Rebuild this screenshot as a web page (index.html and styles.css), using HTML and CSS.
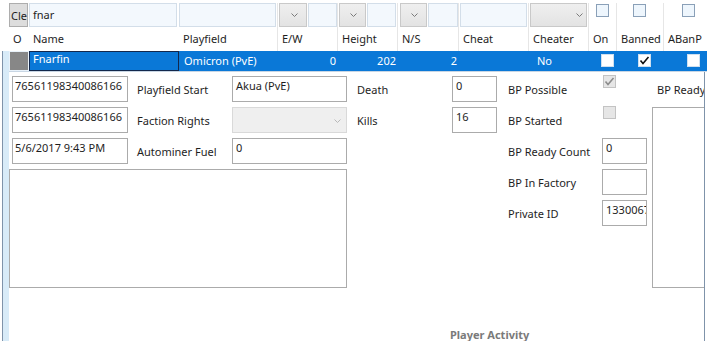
FILE: index.html
```html
<!DOCTYPE html>
<html>
<head>
  <meta charset="utf-8">
  <link rel="stylesheet" href="styles.css">
</head>
<body>
  <div class="heads">
    <div class="col c0">
      <div class="filter"><button class="clear">Cle</button></div>
      <div class="title">O</div>
    </div>
    <div class="col c1">
      <div class="filter"><div class="tb w148">fnar</div></div>
      <div class="title">Name</div>
    </div>
    <div class="col c2">
      <div class="filter"><div class="tb w97"></div></div>
      <div class="title">Playfield</div>
    </div>
    <div class="col c3">
      <div class="filter pad1">
        <div class="combo w28 mid"><svg class="chev" width="7" height="4"><polyline points="0.5,0.5 3.5,3.5 6.5,0.5" /></svg></div>
        <div class="tb w29"></div>
      </div>
      <div class="title">E/W</div>
    </div>
    <div class="col c4">
      <div class="filter pad1">
        <div class="combo w27 mid"><svg class="chev" width="7" height="4"><polyline points="0.5,0.5 3.5,3.5 6.5,0.5" /></svg></div>
        <div class="tb w29"></div>
      </div>
      <div class="title">Height</div>
    </div>
    <div class="col c5">
      <div class="filter pad2">
        <div class="combo w27 mid"><svg class="chev" width="7" height="4"><polyline points="0.5,0.5 3.5,3.5 6.5,0.5" /></svg></div>
        <div class="tb w30"></div>
      </div>
      <div class="title">N/S</div>
    </div>
    <div class="col c6">
      <div class="filter pad1"><div class="tb w67"></div></div>
      <div class="title">Cheat</div>
    </div>
    <div class="col c7">
      <div class="filter pad1">
        <div class="combo w57 end"><svg class="chev" width="7" height="4"><polyline points="0.5,0.5 3.5,3.5 6.5,0.5" /></svg></div>
      </div>
      <div class="title">Cheater</div>
    </div>
    <div class="col c8">
      <div class="filter"><span class="fcheck"></span></div>
      <div class="title">On</div>
    </div>
    <div class="col c9">
      <div class="filter"><span class="fcheck"></span></div>
      <div class="title">Banned</div>
    </div>
    <div class="col c10">
      <div class="filter"><span class="fcheck"></span></div>
      <div class="title">ABanP</div>
    </div>
  </div>

  <div class="lower">
    <div class="gutter"></div>
    <div class="rows">
      <div class="selrow">
        <div class="cell c0"><span class="rowhead"></span></div>
        <div class="cell c1 current">Fnarfin</div>
        <div class="cell c2">Omicron (PvE)</div>
        <div class="cell c3 num">0</div>
        <div class="cell c4 num">202</div>
        <div class="cell c5 num">2</div>
        <div class="cell c6"></div>
        <div class="cell c7 txt">No</div>
        <div class="cell c8"><span class="rcheck"></span></div>
        <div class="cell c9"><span class="rcheck"><svg width="11" height="11"><polyline points="1.5,5.5 4,8.5 9.5,2" /></svg></span></div>
        <div class="cell c10"><span class="rcheck"></span></div>
      </div>

      <div class="detail">
        <div class="form">
          <div class="box id1">76561198340086166</div>
          <div class="lbl l1">Playfield Start</div>
          <div class="box in1">Akua (PvE)</div>
          <div class="lbl l2">Death</div>
          <div class="box in2">0</div>
          <div class="lbl l3">BP Possible</div>
          <span class="dcheck r1"><svg width="11" height="11"><polyline points="1.5,5.5 4,8.5 9.5,2" /></svg></span>
          <div class="lbl l4">BP Ready</div>

          <div class="box id2">76561198340086166</div>
          <div class="lbl l1 r2">Faction Rights</div>
          <div class="box in1 r2 disabled"><svg class="chev" width="7" height="4"><polyline points="0.5,0.5 3.5,3.5 6.5,0.5" /></svg></div>
          <div class="lbl l2 r2">Kills</div>
          <div class="box in2 r2">16</div>
          <div class="lbl l3 r2">BP Started</div>
          <span class="dcheck r2"></span>
          <div class="box ready"></div>

          <div class="box id3">5/6/2017 9:43 PM</div>
          <div class="lbl l1 r3">Autominer Fuel</div>
          <div class="box in1 r3">0</div>
          <div class="lbl l3 r3">BP Ready Count</div>
          <div class="box in3 r3">0</div>

          <div class="box notes"></div>
          <div class="lbl l3 r4">BP In Factory</div>
          <div class="box in3 r4"></div>

          <div class="lbl l3 r5">Private ID</div>
          <div class="box in3 r5">13300671</div>
        </div>
        <div class="section">Player Activity</div>
      </div>
    </div>
  </div>
</body>
</html>
```

FILE: styles.css
```css
body {
  margin: 0;
  width: 707px;
  height: 341px;
  overflow: hidden;
  background: #fff;
  color: #1e1e1e;
  font-family: "Noto Sans", "Open Sans", sans-serif;
  font-size: 11px;
}

/* Column widths shared by the header and the data row */
.c0 { width: 20px; }
.c1 { width: 150px; }
.c2 { width: 99px; }
.c3 { width: 60px; }
.c4 { width: 60px; }
.c5 { width: 61px; }
.c6 { width: 70px; }
.c7 { width: 60px; }
.c8 { width: 28px; }
.c9 { width: 47px; }
.c10 { width: 48px; }

/* Header with filters */
.heads {
  display: flex;
  padding: 3px 0 0 9px;
}

.col {
  flex: none;
  box-sizing: border-box;
  border-right: 1px solid #e6e6e6;
}

.col.c0,
.col.c1 {
  border-right: none;
}

.filter {
  height: 24px;
  display: flex;
  gap: 1px;
}

.filter.pad1 { padding-left: 1px; }
.filter.pad2 { padding-left: 2px; }

.title {
  height: 24px;
  line-height: 24px;
  padding-left: 4px;
  white-space: nowrap;
  overflow: hidden;
}

.clear {
  width: 19px;
  height: 24px;
  padding: 0 0 0 1px;
  margin: 0;
  border: 1px solid #adadad;
  background: #dddddd;
  font: inherit;
  color: #1e1e1e;
  text-align: left;
  overflow: hidden;
  white-space: nowrap;
}

.tb {
  flex: none;
  box-sizing: border-box;
  height: 24px;
  padding: 3px 3px 0;
  border: 1px solid #d3dee9;
  background: #f3f8fd;
  white-space: nowrap;
  overflow: hidden;
}

.w148 { width: 148px; }
.w97 { width: 97px; }
.w67 { width: 67px; }
.w30 { width: 30px; }
.w29 { width: 29px; }
.w28 { width: 28px; }
.w27 { width: 27px; }
.w57 { width: 57px; }

.combo {
  flex: none;
  box-sizing: border-box;
  height: 24px;
  display: flex;
  align-items: center;
  border: 1px solid #c9c9c9;
  background: linear-gradient(#efefef, #e3e3e3);
}

.combo.mid { justify-content: flex-end; padding-right: 8px; }
.combo.end { justify-content: flex-end; padding-right: 3px; }

.chev polyline {
  fill: none;
  stroke: #7a7a7a;
  stroke-width: 1;
}

.fcheck {
  display: block;
  box-sizing: border-box;
  width: 13px;
  height: 13px;
  margin-top: 1px;
  border: 1px solid #8aa0b8;
  background: #eef6fd;
}

.c8 .fcheck, .c8 .rcheck { margin-left: 7px; }
.c9 .fcheck, .c9 .rcheck { margin-left: 16px; }
.c10 .fcheck, .c10 .rcheck { margin-left: 18px; }

/* Row area with the blue left gutter */
.lower {
  display: flex;
}

.gutter {
  flex: none;
  width: 6px;
  margin-left: 2px;
  border-left: 1px solid #7f93aa;
  background: #d8ebf8;
}

.rows {
  flex: 1;
  min-width: 0;
}

.selrow {
  display: flex;
  height: 20px;
  background: #0a78d7;
  color: #fff;
  border-bottom: 1px solid #c8d6e4;
}

.cell {
  flex: none;
  box-sizing: border-box;
  line-height: 20px;
  white-space: nowrap;
  overflow: hidden;
  padding-left: 5px;
}

.cell.c0 {
  padding: 1px;
  background: #e9f2fa;
}

.rowhead {
  display: block;
  height: 18px;
  background: #878787;
}

.cell.current {
  border: 1px solid #13284c;
  line-height: 13px;
  padding-left: 3px;
}

.cell.num {
  text-align: right;
  padding: 0 2px 0 0;
}

.cell.txt { padding-left: 8px; }

.rcheck {
  display: block;
  box-sizing: border-box;
  width: 13px;
  height: 13px;
  margin-top: 3px;
  border: 1px solid #cfe0f0;
  background: #fff;
}

.rcheck polyline,
.dcheck polyline {
  fill: none;
  stroke: #111;
  stroke-width: 1.6;
}

.rcheck svg,
.dcheck svg {
  display: block;
}

/* Row details */
.detail {
  height: 269px;
  margin-right: 2px;
  border-right: 1px solid #7f93aa;
  overflow: hidden;
}

.form {
  display: grid;
  grid-template-columns: 3px 116px 9px 95px 115px 10px 95px 45px 11px 94px 45px 5px 52px;
  grid-template-rows: 26px 26px 26px 26px 26px 57px;
  row-gap: 5px;
  padding-top: 4px;
}

.box {
  box-sizing: border-box;
  border: 1px solid #ababab;
  background: #fff;
  padding: 1px 3px 0;
  white-space: nowrap;
  overflow: hidden;
}

.lbl {
  align-self: center;
  white-space: nowrap;
  grid-row: 1;
}

.id1 { grid-column: 2; grid-row: 1; padding-left: 2px; }
.id2 { grid-column: 2; grid-row: 2; padding-left: 2px; }
.id3 { grid-column: 2; grid-row: 3; padding-left: 2px; }
.l1 { grid-column: 4; }
.in1 { grid-column: 5; grid-row: 1; }
.l2 { grid-column: 7; }
.in2 { grid-column: 8; grid-row: 1; }
.l3 { grid-column: 10; }
.in3 { grid-column: 11; }
.l4 { grid-column: 13; padding-left: 5px; }

.r1 { grid-row: 1; }
.lbl.r2, .box.r2, .r2 { grid-row: 2; }
.lbl.r3, .box.r3 { grid-row: 3; }
.lbl.r4, .box.r4 { grid-row: 4; }
.lbl.r5, .box.r5 { grid-row: 5; }

.box.disabled {
  display: flex;
  align-items: center;
  justify-content: flex-end;
  padding-right: 5px;
  border-color: #d9d9d9;
  background: #efefef;
}

.box.disabled .chev polyline {
  stroke: #b8b8b8;
}

.dcheck {
  grid-column: 11;
  box-sizing: border-box;
  width: 13px;
  height: 13px;
  margin: -1px 0 0 1px;
  border: 1px solid #c3c3c3;
  background: #e6e6e6;
}

.dcheck polyline {
  stroke: #8c8c8c;
}

.ready {
  grid-column: 13;
  grid-row: 2 / 7;
  border-right: none;
}

.notes {
  grid-column: 1 / 6;
  grid-row: 4 / 7;
}

.section {
  margin-top: 39px;
  padding-left: 441px;
  font-weight: bold;
  color: #7a7a7a;
  white-space: nowrap;
}
```
